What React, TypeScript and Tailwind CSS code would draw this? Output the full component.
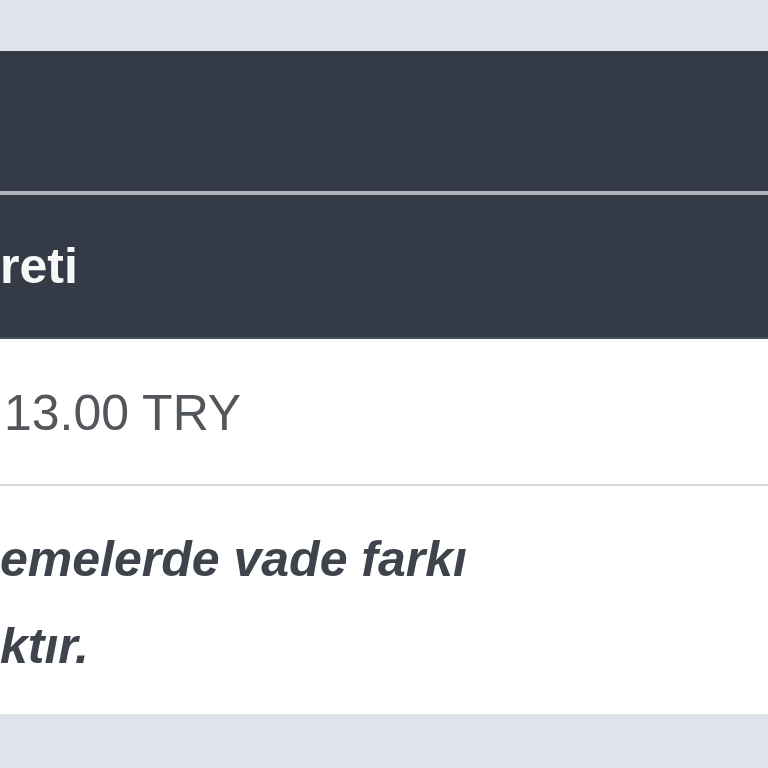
export default function App() {
  return (
    <div className="flex h-[768px] w-[768px] flex-col overflow-hidden bg-[#e0e3eb] font-['Liberation_Sans',Arial,sans-serif]">
      <div className="h-[51px] shrink-0" />
      <table className="w-full shrink-0 border-collapse">
        <thead>
          <tr className="h-[142px] border-b-[4px] border-[#aeb3ba] bg-[#343a46]">
            <th />
          </tr>
          <tr className="h-[145px] border-b-[2px] border-[#4a505b] bg-[#343a46]">
            <th className="p-0 text-left align-top">
              <div className="pt-[46px] text-[50px] leading-none font-bold text-[#f7f7f7]">reti</div>
            </th>
          </tr>
        </thead>
        <tbody>
          <tr className="h-[147px] border-b-[2px] border-[#d8d9db] bg-white">
            <td className="p-0 align-top">
              <div className="pt-[49px] pl-[4px] text-[50px] leading-none text-[#53575c]">13.00 TRY</div>
            </td>
          </tr>
          <tr className="h-[229px] bg-white">
            <td className="p-0 align-top">
              <p className="pt-[30px] text-[50px] leading-[87px] font-bold text-[#3f444c] italic">
                emelerde vade farkı
                <br />
                ktır.
              </p>
            </td>
          </tr>
        </tbody>
      </table>
    </div>
  );
}
